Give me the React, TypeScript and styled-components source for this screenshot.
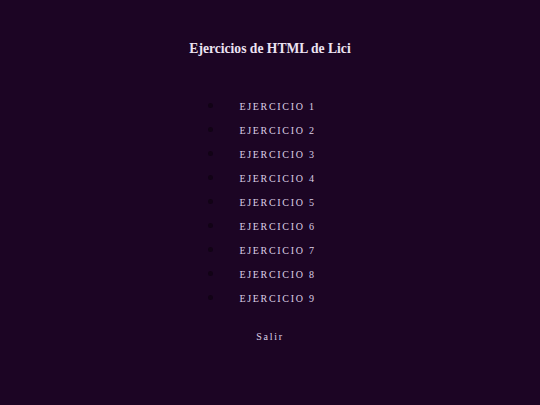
import styled, { createGlobalStyle } from "styled-components";

const Global = createGlobalStyle`
  html, body {
    margin: 0;
    background: #1c0524;
  }
  body {
    font-family: "Liberation Serif", "Times New Roman", serif;
  }
`;

const Page = styled.div`
  width: 540px;
  height: 405px;
  display: flex;
  flex-direction: column;
  align-items: center;
  background: #1c0524;
`;

const Title = styled.h1`
  margin: 41px 0 0;
  font-size: 13.6px;
  font-weight: bold;
  color: #ece3f2;
`;

const List = styled.ul`
  margin: 39px 0 0;
  padding: 0;
  color: #120316;
`;

const Item = styled.li`
  height: 24px;
  list-style: disc;
  padding-left: 15px;
`;

const Link = styled.a`
  font-size: 10px;
  letter-spacing: 1.7px;
  color: #ddd0e6;
  text-decoration: none;
`;

const Exit = styled.a`
  margin-top: 19px;
  font-size: 10px;
  letter-spacing: 1.7px;
  color: #ddd0e6;
  text-decoration: none;
`;

function App() {
  const items = [1, 2, 3, 4, 5, 6, 7, 8, 9];
  return (
    <Page>
      <Global />
      <Title>Ejercicios de HTML de Lici</Title>
      <List>
        {items.map((n) => (
          <Item key={n}>
            <Link href="#">EJERCICIO {n}</Link>
          </Item>
        ))}
      </List>
      <Exit href="#">Salir</Exit>
    </Page>
  );
}

export default App;
